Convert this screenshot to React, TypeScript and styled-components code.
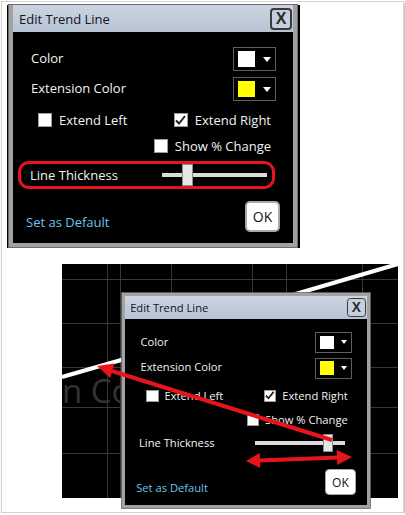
import React from 'react';
import styled, { createGlobalStyle } from 'styled-components';

const GlobalStyle = createGlobalStyle`
  html, body {
    margin: 0;
    padding: 0;
    background: #fff;
  }

  body {
    font-family: "Open Sans", "Noto Sans", sans-serif;
  }

  * {
    box-sizing: border-box;
  }
`;

const Page = styled.div`
  position: relative;
  width: 403px;
  height: 512px;
  margin: 1px 0 0 1px;
  padding: 3px 0 0 5px;
  border: 1px solid #d2d2d2;
  background: #fff;
  box-shadow: 1px 2px 2px rgba(0, 0, 0, 0.3);
`;

const ShotOne = styled.div`
  width: 293px;
  height: 243px;
  padding: 0 3px 1px 2px;
  background: #000;
`;

const Window = styled.div<{ $flushTop?: boolean; $scale?: number }>`
  width: 288px;
  border: 4px solid #a2a2a2;
  border-top-width: ${(p) => (p.$flushTop ? 0 : 4)}px;
  background: #000;
  zoom: ${(p) => p.$scale ?? 1};
  box-shadow: 0 0 0 1px #6a6a6a;
`;

const TitleBar = styled.div`
  height: 27px;
  padding: 0 1px 0 6px;
  display: flex;
  align-items: center;
  justify-content: space-between;
  background: linear-gradient(#cbd5e1, #b6c3d2);
  color: #14141e;
  font-size: 13px;
`;

const CloseButton = styled.div`
  width: 22px;
  height: 22px;
  display: flex;
  align-items: center;
  justify-content: center;
  border: 2px solid #3a3a3a;
  border-radius: 4px;
  background: #c6d0dc;
  color: #2a2a2a;
  font-size: 16px;
  font-weight: 700;
  font-family: "Liberation Sans", sans-serif;
`;

const Body = styled.div`
  padding: 15px 17px 11px 18px;
  display: flex;
  flex-direction: column;
  color: #f2f2f2;
  font-size: 13px;
`;

const SwatchRow = styled.div`
  height: 24px;
  display: flex;
  align-items: center;
  justify-content: space-between;

  & + & {
    margin-top: 6px;
  }

  & > span {
    padding-bottom: 3px;
  }
`;

const SwatchBox = styled.div`
  width: 43px;
  height: 24px;
  padding-left: 4px;
  display: flex;
  align-items: center;
  border: 1px solid #5e5e5e;
`;

const Swatch = styled.div<{ $color: string }>`
  width: 17px;
  height: 16px;
  background: ${(p) => p.$color};
`;

const DropArrow = styled.div`
  margin-left: 8px;
  width: 0;
  height: 0;
  border-left: 4px solid transparent;
  border-right: 4px solid transparent;
  border-top: 5px solid #fff;
`;

const CheckRow = styled.div<{ $end?: boolean; $gap: number }>`
  margin-top: ${(p) => p.$gap}px;
  height: 14px;
  padding: 0 5px 0 7px;
  display: flex;
  align-items: center;
  justify-content: ${(p) => (p.$end ? 'flex-end' : 'space-between')};
`;

const Check = styled.label`
  display: flex;
  align-items: center;
  gap: 7px;
  white-space: nowrap;
`;

const Box = styled.span`
  width: 14px;
  height: 14px;
  display: flex;
  align-items: center;
  justify-content: center;
  background: #fff;
  border: 1px solid #9a9a9a;
`;

const ThicknessRow = styled.div<{ $highlight?: boolean; $gap: number }>`
  margin: ${(p) => p.$gap}px 1px 0 -13px;
  height: 28px;
  padding: 0 5px 0 9px;
  display: flex;
  align-items: center;
  justify-content: space-between;
  border: 3px solid ${(p) => (p.$highlight ? '#e8141c' : 'transparent')};
  border-radius: 11px;
`;

const Slider = styled.div`
  position: relative;
  width: 105px;
  height: 22px;
  display: flex;
  align-items: center;
`;

const Track = styled.div`
  width: 100%;
  height: 4px;
  background: #dcdcdc;
`;

const Thumb = styled.div`
  position: absolute;
  top: 0;
  width: 11px;
  height: 22px;
  background: #e6e6e6;
  border: 1px solid #8c8c8c;
`;

const Footer = styled.div<{ $gap: number }>`
  margin: ${(p) => p.$gap}px -4px 0 -5px;
  display: flex;
  align-items: flex-end;
  justify-content: space-between;
`;

const DefaultLink = styled.span`
  margin-bottom: 1px;
  color: #6ec3ec;
`;

const OkButton = styled.div`
  width: 35px;
  height: 31px;
  display: flex;
  align-items: center;
  justify-content: center;
  background: #fff;
  border: 2px solid #a8a8a8;
  border-radius: 5px;
  color: #111;
  font-size: 14px;
`;

const ShotTwo = styled.div`
  position: relative;
  width: 336px;
  height: 234px;
  margin: 16px 0 0 55px;
  background: #000;
`;

const Layer = styled.svg`
  position: absolute;
  left: 0;
  top: 0;
  overflow: visible;
  pointer-events: none;
`;

const Watermark = styled.div`
  position: absolute;
  left: 0;
  top: 107px;
  color: #333;
  font-size: 33px;
  line-height: 40px;
`;

const Placed = styled.div`
  position: absolute;
  left: 60px;
  top: 29px;
`;

const CheckMark = () => (
  <svg width="11" height="10" viewBox="0 0 11 10">
    <path d="M1 5.5 L4 8.5 L10 1" fill="none" stroke="#222" strokeWidth="2" />
  </svg>
);

type DialogProps = {
  flushTop?: boolean;
  scale?: number;
  highlight?: boolean;
  thumb: number;
  gaps: [number, number, number, number];
};

const TrendDialog: React.FC<DialogProps> = ({ flushTop, scale, highlight, thumb, gaps }) => (
  <Window $flushTop={flushTop} $scale={scale}>
    <TitleBar>
      <span>Edit Trend Line</span>
      <CloseButton>X</CloseButton>
    </TitleBar>
    <Body>
      <SwatchRow>
        <span>Color</span>
        <SwatchBox>
          <Swatch $color="#ffffff" />
          <DropArrow />
        </SwatchBox>
      </SwatchRow>
      <SwatchRow>
        <span>Extension Color</span>
        <SwatchBox>
          <Swatch $color="#ffff00" />
          <DropArrow />
        </SwatchBox>
      </SwatchRow>
      <CheckRow $gap={gaps[0]}>
        <Check>
          <Box />
          Extend Left
        </Check>
        <Check>
          <Box>
            <CheckMark />
          </Box>
          Extend Right
        </Check>
      </CheckRow>
      <CheckRow $end $gap={gaps[1]}>
        <Check>
          <Box />
          Show % Change
        </Check>
      </CheckRow>
      <ThicknessRow $highlight={highlight} $gap={gaps[2]}>
        <span>Line Thickness</span>
        <Slider>
          <Track />
          <Thumb style={{ left: thumb }} />
        </Slider>
      </ThicknessRow>
      <Footer $gap={gaps[3]}>
        <DefaultLink>Set as Default</DefaultLink>
        <OkButton>OK</OkButton>
      </Footer>
    </Body>
  </Window>
);

const gridX = [45, 58, 109, 190, 224, 300];
const gridY = [15, 59, 103, 143, 189];

const App: React.FC = () => (
  <>
    <GlobalStyle />
    <Page>
      <ShotOne>
        <TrendDialog flushTop highlight thumb={20} gaps={[12, 12, 8, 12]} />
      </ShotOne>
      <ShotTwo>
        <Layer width="336" height="234">
          {gridX.map((x) => (
            <line key={x} x1={x + 0.5} y1="0" x2={x + 0.5} y2="234" stroke="#383838" />
          ))}
          {gridY.map((y) => (
            <line key={y} x1="0" y1={y + 0.5} x2="336" y2={y + 0.5} stroke="#383838" />
          ))}
          <line x1="0" y1="113" x2="80" y2="90" stroke="#fff" strokeWidth="4" />
          <line x1="220" y1="34" x2="336" y2="0" stroke="#fff" strokeWidth="4" />
        </Layer>
        <Watermark>n Co</Watermark>
        <Placed>
          <TrendDialog scale={0.86} thumb={80} gaps={[13, 14, 6, 16]} />
        </Placed>
        <Layer width="336" height="250">
          <g fill="#e8141c" stroke="none">
            <line x1="270" y1="176" x2="50" y2="107" stroke="#e8141c" strokeWidth="4" />
            <polygon points="35,102 52.4,99.6 48.2,114" />
            <line x1="197" y1="196.5" x2="276" y2="193.5" stroke="#e8141c" strokeWidth="4" />
            <polygon points="184,197 198.3,204 197.7,189" />
            <polygon points="290,193 275.3,201 274.7,186" />
          </g>
        </Layer>
      </ShotTwo>
    </Page>
  </>
);

export default App;
